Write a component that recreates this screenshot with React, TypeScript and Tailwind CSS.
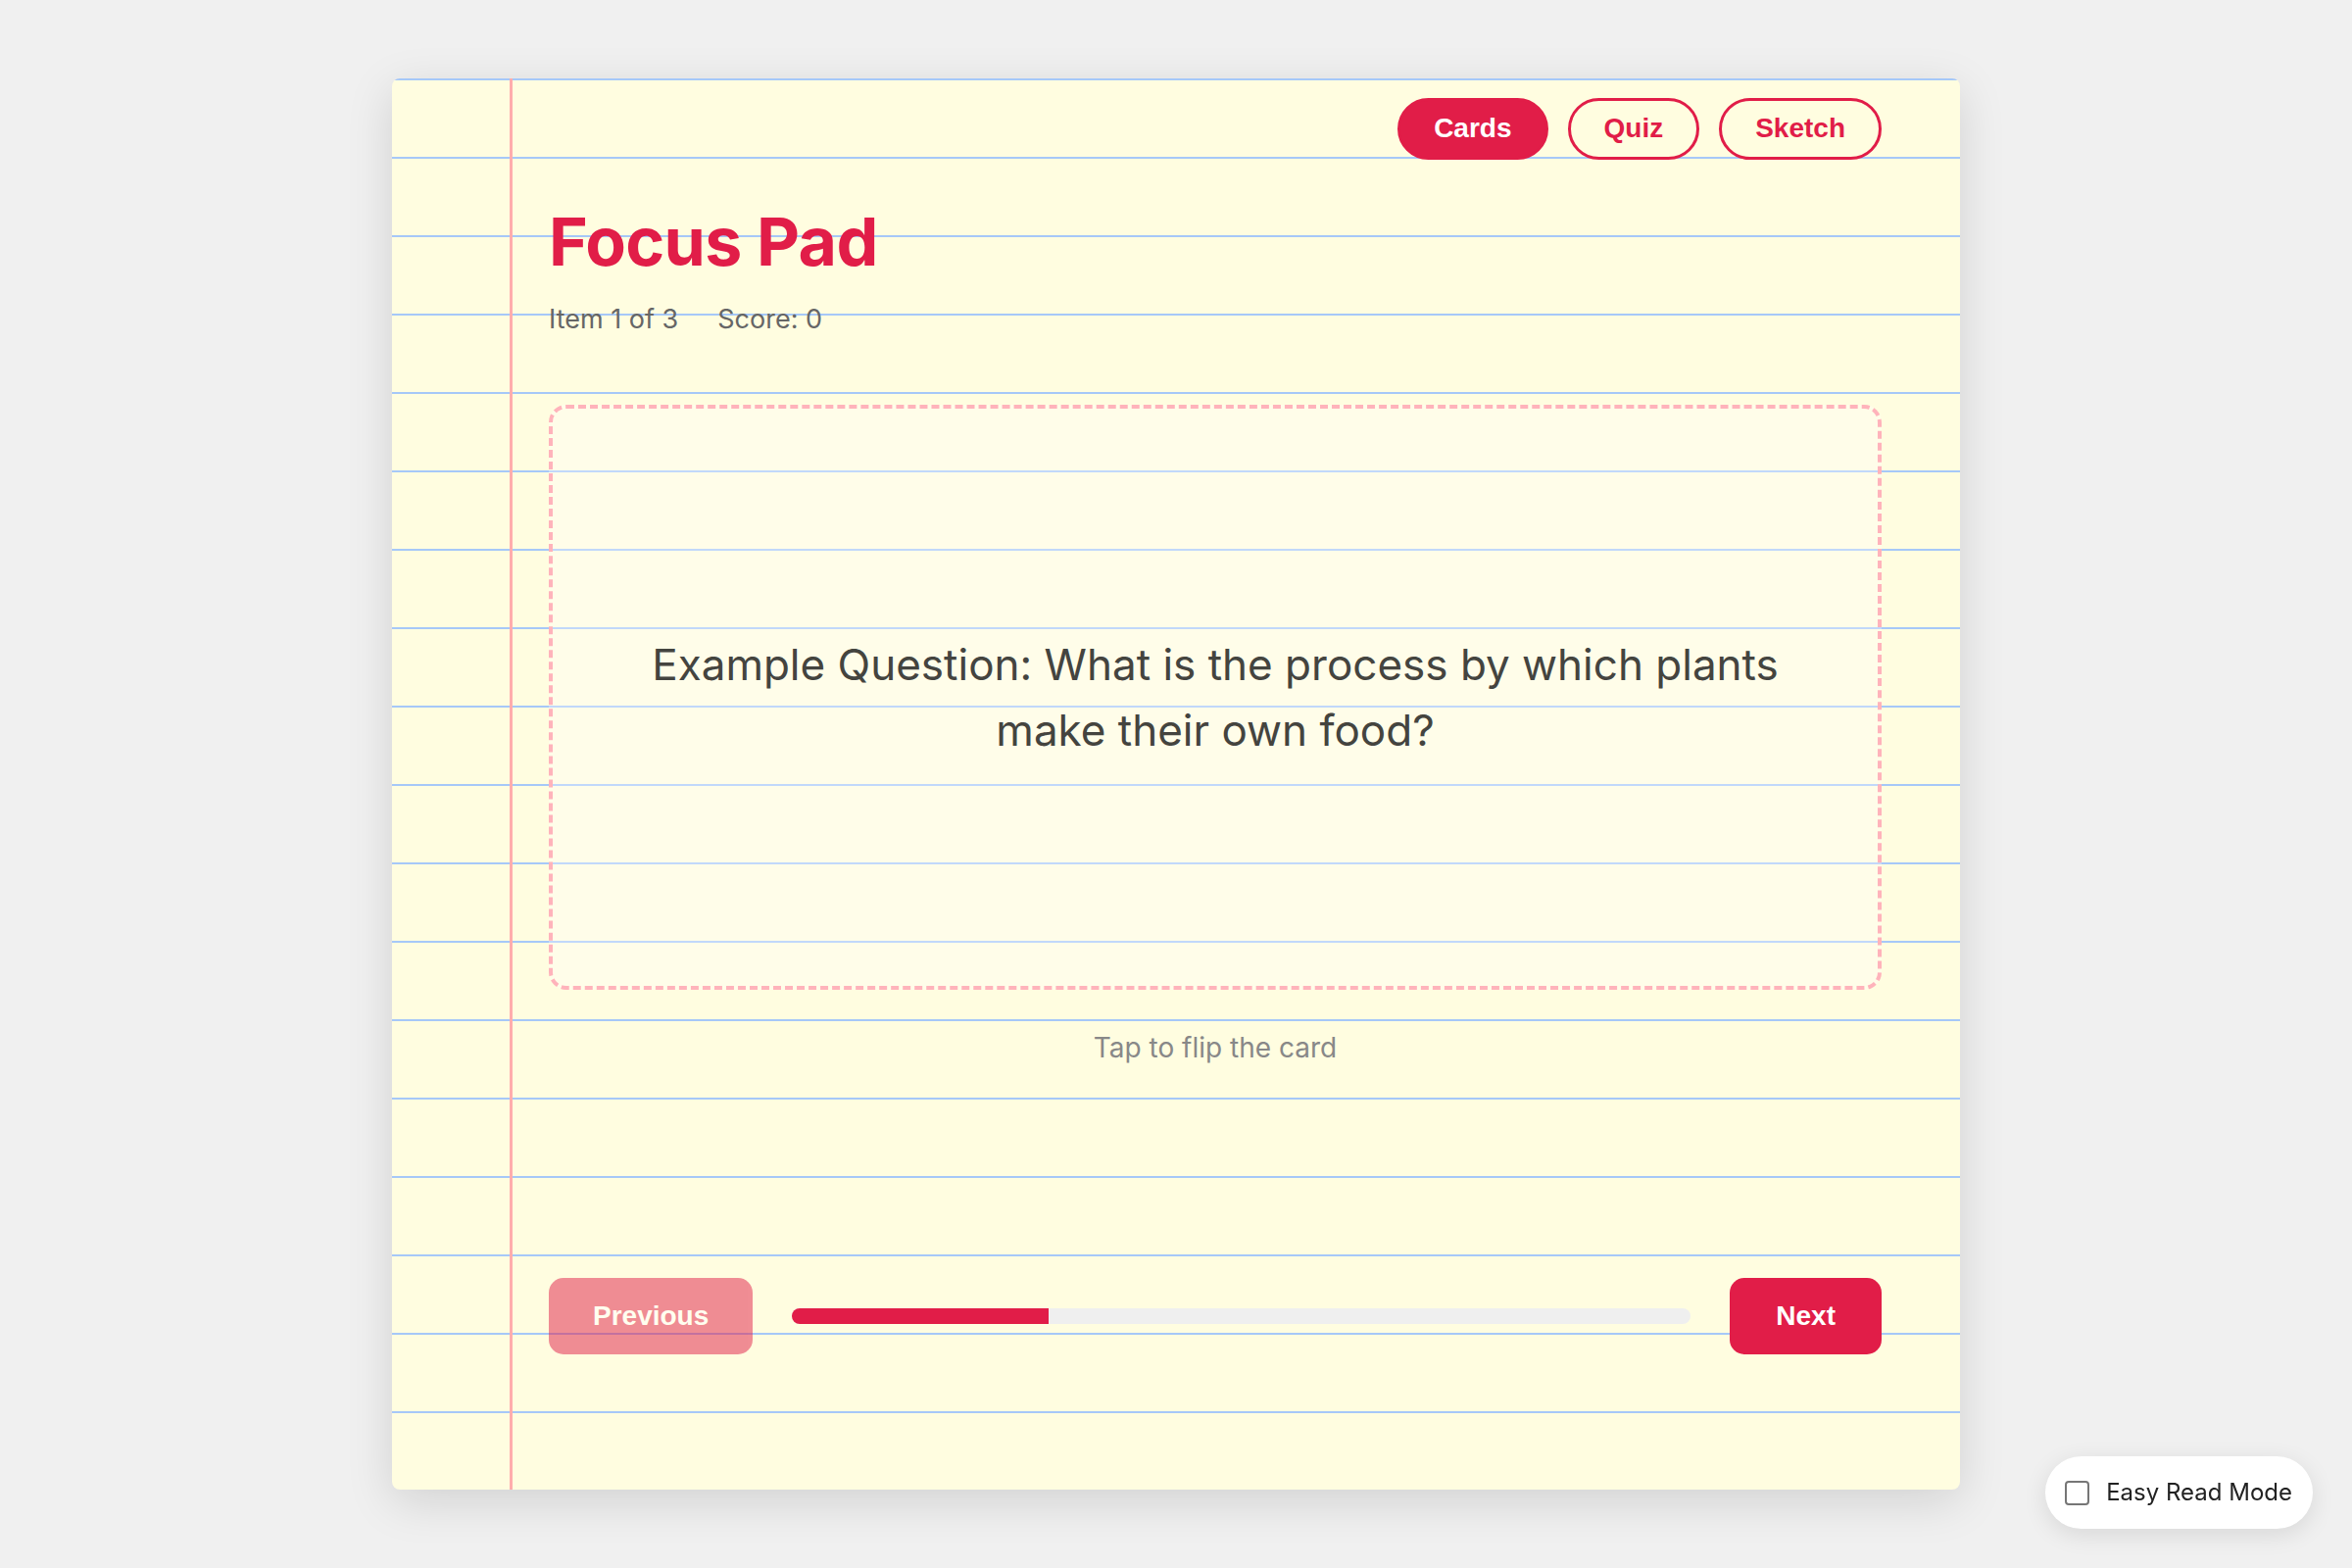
import { useState } from 'react';

const cards = [
  {
    question: 'Example Question: What is the process by which plants make their own food?',
    answer: 'Photosynthesis',
  },
  { question: 'Example Question: What gas do plants absorb?', answer: 'Carbon dioxide' },
  { question: 'Example Question: What gives leaves their colour?', answer: 'Chlorophyll' },
];

const modes = ['Cards', 'Quiz', 'Sketch'];

export default function App() {
  const [mode, setMode] = useState('Cards');
  const [index, setIndex] = useState(0);
  const [flipped, setFlipped] = useState(false);
  const [easyRead, setEasyRead] = useState(false);

  const card = cards[index];

  return (
    <div className="min-h-screen bg-[#f0f0f0] pt-[80px] flex justify-center font-['Inter',sans-serif]">
      {/* Legal pad */}
      <div className="w-[1600px] h-[1440px] rounded-[8px] shadow-[0_12px_48px_rgba(0,0,0,0.13)] bg-[#fffde0] bg-[linear-gradient(to_right,transparent_120px,#ffadad_120px,#ffadad_123px,transparent_123px),repeating-linear-gradient(to_bottom,#a6c8f8_0px,#a6c8f8_2px,transparent_2px,transparent_80px)] pl-[160px] pr-[80px] pt-[20px] flex flex-col">
        {/* Mode switch */}
        <div className="flex justify-end gap-[20px]">
          {modes.map((m) => (
            <button
              key={m}
              onClick={() => setMode(m)}
              className={`h-[63px] px-[34px] pb-[2px] rounded-full border-[3px] border-[#e11d48] font-['Liberation_Sans',Arial,sans-serif] font-bold text-[28px] leading-none ${
                mode === m ? 'bg-[#e11d48] text-white' : 'bg-transparent text-[#e11d48]'
              }`}
            >
              {m}
            </button>
          ))}
        </div>

        {/* Header */}
        <h1 className="mt-[49px] text-[68px] leading-none font-bold text-[#e11d48] tracking-[-0.01em]">Focus Pad</h1>
        <div className="mt-[28px] flex gap-[40px] text-[27px] leading-[36px] text-[#666666]">
          <span>Item {index + 1} of {cards.length}</span>
          <span>Score: 0</span>
        </div>

        {/* Flash card */}
        <button
          onClick={() => setFlipped(!flipped)}
          className="mt-[69px] h-[597px] w-full rounded-[18px] border-[4px] border-dashed border-[#ffb3bb] bg-white/30 flex items-center justify-center px-[60px]"
        >
          <p className="max-w-[1190px] text-[44px] leading-[67px] text-[#44443f] text-center">
            {flipped ? card.answer : card.question}
          </p>
        </button>
        <p className="mt-[39px] text-center text-[28px] leading-[40px] text-[#888888]">Tap to flip the card</p>

        {/* Controls */}
        <div className="mt-[215px] flex items-center gap-[40px] font-['Liberation_Sans',Arial,sans-serif]">
          <button
            disabled={index === 0}
            onClick={() => setIndex(index - 1)}
            className="h-[78px] px-[45px] rounded-[15px] bg-[#e11d48] text-white font-bold text-[28px] disabled:opacity-50"
          >
            Previous
          </button>
          <div className="flex-1 h-[16px] rounded-full bg-[#efefef] overflow-hidden">
            <div className="h-full w-[28.5%] bg-[#e11d48]" />
          </div>
          <button
            disabled={index === cards.length - 1}
            onClick={() => setIndex(index + 1)}
            className="h-[78px] px-[47px] rounded-[15px] bg-[#e11d48] text-white font-bold text-[28px] disabled:opacity-50"
          >
            Next
          </button>
        </div>
      </div>

      {/* Easy read toggle */}
      <label className="fixed right-[40px] bottom-[40px] h-[74px] pl-[20px] pr-[21px] rounded-full bg-white shadow-[0_6px_24px_rgba(0,0,0,0.1)] flex items-center gap-[17px] text-[24px] text-[#222222] cursor-pointer">
        <input type="checkbox" className="sr-only" checked={easyRead} onChange={() => setEasyRead(!easyRead)} />
        <span className="w-[25px] h-[25px] rounded-[4px] border-2 border-[#767676] bg-white" />
        <span>Easy Read Mode</span>
      </label>
    </div>
  );
}
